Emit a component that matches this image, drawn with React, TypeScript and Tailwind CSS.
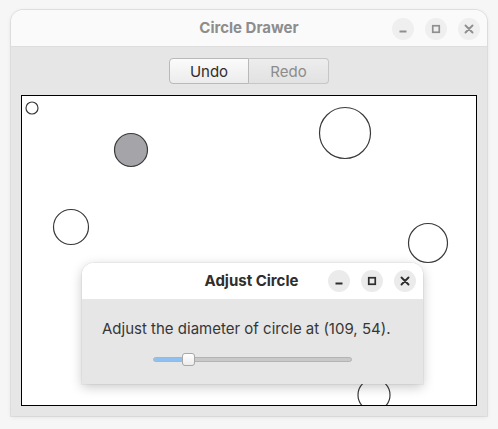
import React from "react";

function WinButtons({ dark }: { dark: boolean }) {
  const c = dark ? "#2e2e2e" : "#8f8f8f";
  const bg = dark ? "bg-[#ebebeb]" : "bg-[#efefef]";
  return (
    <div className="flex items-center gap-[11px]">
      <div className={`w-[22px] h-[22px] rounded-full ${bg} flex items-center justify-center`}>
        <svg width="12" height="12" viewBox="0 0 12 12">
          <rect x="2.5" y="7.5" width="7" height="2" fill={c} />
        </svg>
      </div>
      <div className={`w-[22px] h-[22px] rounded-full ${bg} flex items-center justify-center`}>
        <svg width="12" height="12" viewBox="0 0 12 12">
          <rect x="2.75" y="2.75" width="6.5" height="6.5" fill="none" stroke={c} strokeWidth="1.7" />
        </svg>
      </div>
      <div className={`w-[22px] h-[22px] rounded-full ${bg} flex items-center justify-center`}>
        <svg width="12" height="12" viewBox="0 0 12 12">
          <path d="M2.5 2.5 L9.5 9.5 M9.5 2.5 L2.5 9.5" stroke={c} strokeWidth="1.9" strokeLinecap="round" />
        </svg>
      </div>
    </div>
  );
}

const circles = [
  { x: 10, y: 12, d: 12, fill: false },
  { x: 109, y: 54, d: 33, fill: true },
  { x: 49, y: 131, d: 35, fill: false },
  { x: 323, y: 37, d: 51, fill: false },
  { x: 406, y: 147, d: 39, fill: false },
  { x: 352, y: 299, d: 32, fill: false },
];

export default function App() {
  return (
    <div
      className="relative w-[498px] h-[429px] bg-[#f6f6f6] overflow-hidden pt-[10px] pl-[11px]"
      style={{ fontFamily: "Inter, 'Noto Sans', sans-serif" }}
    >
      {/* Main window */}
      <div className="w-[476px] h-[406px] rounded-t-[12px] flex flex-col overflow-hidden shadow-[0_0_0_1px_rgba(0,0,0,0.07),0_1px_5px_rgba(0,0,0,0.09)]">
        <div className="relative h-[37px] shrink-0 bg-[#fafafa] border-b border-[#dedede] flex items-center justify-center">
          <span className="text-[15px] font-bold text-[#8d8d8d]">Circle Drawer</span>
          <div className="absolute right-[7px] top-[8px]">
            <WinButtons dark={false} />
          </div>
        </div>
        <div className="flex-1 bg-[#e6e6e6] flex flex-col items-center pt-[11px] px-[10px] pb-[11px]">
          <div className="flex h-[26px]">
            <button className="w-[80px] h-[26px] rounded-l-[4px] border border-[#b9b9b9] bg-gradient-to-b from-[#fbfbfb] to-[#ececec] text-[15px] text-[#2e2e2e] leading-none">
              Undo
            </button>
            <button className="w-[80px] h-[26px] rounded-r-[4px] border border-l-0 border-[#c6c6c6] bg-gradient-to-b from-[#ededed] to-[#e2e2e2] text-[15px] text-[#8c8c8c] leading-none">
              Redo
            </button>
          </div>
          <div className="mt-[11px] w-[456px] h-[311px] border border-black bg-white overflow-hidden">
            <svg width="454" height="309" className="block">
              {circles.map((c, i) => (
                <circle
                  key={i}
                  cx={c.x}
                  cy={c.y}
                  r={c.d / 2}
                  fill={c.fill ? "#a5a4a8" : "none"}
                  stroke="#3a3a3a"
                  strokeWidth="1.2"
                />
              ))}
            </svg>
          </div>
        </div>
      </div>

      {/* Dialog */}
      <div className="absolute left-[82px] top-[263px] w-[341px] h-[121px] rounded-t-[12px] overflow-hidden flex flex-col shadow-[0_0_0_1px_rgba(0,0,0,0.04),0_3px_12px_rgba(0,0,0,0.22)]">
        <div className="relative h-[36px] shrink-0 bg-white flex items-center justify-center">
          <span className="text-[15px] font-bold text-[#2e2e2e] ml-[-2px]">Adjust Circle</span>
          <div className="absolute right-[7px] top-[7px]">
            <WinButtons dark={true} />
          </div>
        </div>
        <div className="flex-1 bg-[#e6e6e6] flex flex-col">
          <div className="pl-[20px] pt-[20px] text-[15px] leading-[20px] text-[#363636]">
            Adjust the diameter of circle at (109, 54).
          </div>
          <div className="mt-[14px] flex justify-center">
            <div className="relative w-[199px] h-[13px] flex items-center -ml-[1px]">
              <div className="w-full h-[5px] rounded-full bg-[#c9c9c9] border border-[#b3b3b3] flex overflow-hidden">
                <div className="w-[31px] h-full bg-[#8fc0f2]"></div>
              </div>
              <div className="absolute left-[29px] top-0 w-[13px] h-[13px] rounded-[3px] border border-[#a8a8a8] bg-gradient-to-b from-[#ffffff] to-[#ececec]"></div>
            </div>
          </div>
        </div>
      </div>
    </div>
  );
}
